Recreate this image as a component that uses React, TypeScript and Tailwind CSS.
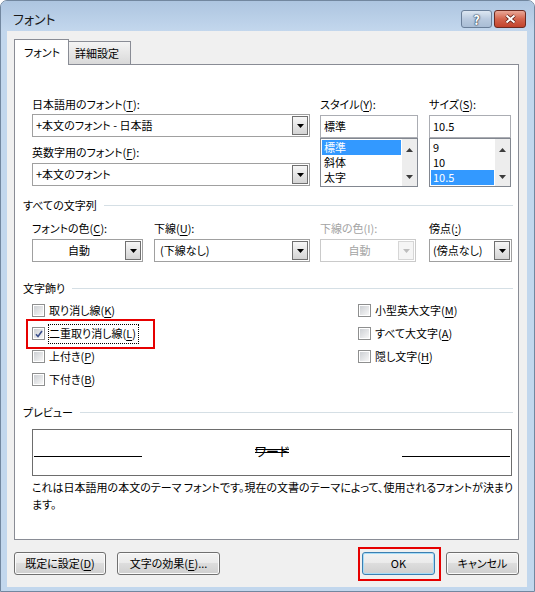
import React from "react";

type Kids = { children?: React.ReactNode; className?: string };

function U({ children }: Kids) {
  return <span className="underline underline-offset-[2px]">{children}</span>;
}

function Tri({ up = false, color = "#000" }: { up?: boolean; color?: string }) {
  return (
    <svg width="7" height="4" viewBox="0 0 7 4">
      <polygon points={up ? "0,4 7,4 3.5,0" : "0,0 7,0 3.5,4"} fill={color} />
    </svg>
  );
}

function DropBtn({ disabled = false }: { disabled?: boolean }) {
  return (
    <div
      className={`my-[1px] mr-[1px] w-[16px] flex items-center justify-center border ${
        disabled
          ? "border-[#d6d6d6] bg-[#f5f5f5]"
          : "border-[#707070] bg-gradient-to-b from-[#f7f7f7] to-[#d4d4d4]"
      }`}
    >
      <Tri color={disabled ? "#bdbdbd" : "#000"} />
    </div>
  );
}

function Combo({
  children,
  className = "",
  center = false,
  disabled = false,
  pad = "pl-[3px]",
}: Kids & { center?: boolean; disabled?: boolean; pad?: string }) {
  return (
    <div
      className={`h-[23px] flex border bg-white ${
        disabled ? "border-[#cacaca] text-[#a3a3a3]" : "border-[#a0a0a0]"
      } ${className}`}
    >
      <div className={`flex-1 flex items-center whitespace-nowrap ${center ? "justify-center" : pad}`}>
        {children}
      </div>
      <DropBtn disabled={disabled} />
    </div>
  );
}

function Label({ children, className = "" }: Kids) {
  return <div className={`h-[16px] leading-[16px] whitespace-nowrap ${className}`}>{children}</div>;
}

function Header({ children, className = "" }: Kids) {
  return (
    <div className={`h-[16px] flex items-center gap-[7px] ${className}`}>
      <span className="leading-[16px] whitespace-nowrap">{children}</span>
      <div className="flex-1 h-px bg-[#d5dfe5]" />
    </div>
  );
}

function ListBox({ items, sel }: { items: string[]; sel: number }) {
  return (
    <div className="h-[49px] flex border border-[#828790] bg-white">
      <div className="flex-1 px-[1px] pt-[1px]">
        {items.map((it, i) => (
          <div
            key={it}
            className={`h-[15px] flex items-center pl-[2px] overflow-hidden ${i === sel ? "bg-[#3399ff] text-white" : ""}`}
          >
            <span className="leading-[13px] text-[11px]">{it}</span>
          </div>
        ))}
      </div>
      <div className="w-[15px] flex flex-col items-center justify-between pt-[9px] pb-[7px] bg-[#ededed]">
        <Tri up color="#3c3c3c" />
        <Tri color="#3c3c3c" />
      </div>
    </div>
  );
}

function Check({ checked = false }: { checked?: boolean }) {
  return (
    <div className="w-[13px] h-[13px] border border-[#8e8f8f] bg-white p-[1px] shrink-0">
      <div className="w-full h-full bg-gradient-to-br from-[#cdd0d4] to-[#f7f7f7] flex items-center justify-center">
        {checked && (
          <svg width="8" height="8" viewBox="0 0 8 8">
            <path d="M1 4.2 L3 6.5 L7 1" stroke="#3a4f8c" strokeWidth="1.6" fill="none" />
          </svg>
        )}
      </div>
    </div>
  );
}

function CheckRow({ children, checked = false, focus = false, mark = false }: Kids & { checked?: boolean; focus?: boolean; mark?: boolean }) {
  return (
    <div className="relative h-[23px] flex items-center">
      <Check checked={checked} />
      <span
        className={`ml-[3px] h-[20px] pr-[2px] flex items-center whitespace-nowrap border ${
          focus ? "border-dotted border-black" : "border-transparent"
        }`}
      >
        {children}
      </span>
      {mark && <span className="absolute -left-[6px] -top-[3px] w-[129px] h-[30px] border-2 border-[#e60000]" />}
    </div>
  );
}

function Btn({ children, className = "", primary = false }: Kids & { primary?: boolean }) {
  return (
    <div
      className={`h-[23px] rounded-[3px] border flex items-center justify-center whitespace-nowrap bg-[linear-gradient(#f3f3f3,#ebebeb_45%,#dddddd_50%,#cfcfcf)] ${
        primary
          ? "border-[#3c7fb1] shadow-[inset_0_0_0_1px_#a6dcf7]"
          : "border-[#707070] shadow-[inset_0_0_0_1px_#fbfbfb]"
      } ${className}`}
    >
      {children}
    </div>
  );
}

export default function App() {
  return (
    <div className="w-[535px] h-[592px] flex flex-col bg-[#c2d7ed] border border-[#72879f] rounded-t-[7px] overflow-hidden text-[11px] text-black [font-family:'Noto_Sans_CJK_JP','Noto_Sans',sans-serif] [font-feature-settings:'palt']">
      {/* title bar */}
      <div className="h-[30px] flex items-start pl-[12px] pr-[8px] bg-gradient-to-b from-[#adc5e0] to-[#c3d7ed]">
        <div className="mt-[10px] text-[13px] leading-[16px] text-[#1a1a1a]">フォント</div>
        <div className="ml-auto mt-[9px] flex gap-[2px]">
          <div className="w-[31px] h-[18px] rounded-[3px] border border-[#6a7f99] bg-gradient-to-b from-[#dde7f2] via-[#b9cadf] to-[#a9bdd5] flex items-center justify-center">
            <span className="text-[13px] font-bold leading-none text-white [text-shadow:0_0_1px_#2d3f55,0_0_1px_#2d3f55,0_0_2px_#2d3f55]">
              ?
            </span>
          </div>
          <div className="w-[32px] h-[18px] rounded-[3px] border border-[#6b2a21] bg-gradient-to-b from-[#e9a898] via-[#d3644d] to-[#c2432c] flex items-center justify-center">
            <svg width="13" height="10" viewBox="0 0 13 10">
              <path d="M2.5 1.5 L10.5 8.5 M10.5 1.5 L2.5 8.5" stroke="#5b1b12" strokeWidth="3.6" />
              <path d="M2.5 1.5 L10.5 8.5 M10.5 1.5 L2.5 8.5" stroke="#ffffff" strokeWidth="2" />
            </svg>
          </div>
        </div>
      </div>

      {/* client area */}
      <div className="flex-1 ml-[6px] mr-[7px] mb-[4px] bg-[#f0f0f0] flex flex-col pt-[8px] pl-[7px] pr-[8px] pb-[12px]">
        {/* tabs */}
        <div className="h-[25px] flex items-end">
          <div className="relative z-10 h-[26px] -mb-[1px] w-[55px] bg-white border border-b-0 border-[#898c95] flex items-center pl-[9px]">
            フォント
          </div>
          <div className="h-[23px] w-[62px] bg-gradient-to-b from-[#f4f4f4] to-[#d9d9d9] border border-l-0 border-b-0 border-[#898c95] flex items-center pl-[6px]">
            詳細設定
          </div>
        </div>

        {/* panel */}
        <div className="flex-1 bg-white border border-[#898c95] pl-[8px] pr-[5px] pt-[31px] flex flex-col">
          <div className="flex pl-[9px]">
            <div className="w-[278px] flex flex-col">
              <Label>
                日本語用のフォント(<U>T</U>):
              </Label>
              <Combo className="mt-[2px]">+本文のフォント - 日本語</Combo>
              <Label className="mt-[7px]">
                英数字用のフォント(<U>F</U>):
              </Label>
              <Combo className="mt-[3px]">+本文のフォント</Combo>
            </div>
            <div className="ml-[10px] w-[98px] flex flex-col">
              <Label>
                スタイル(<U>Y</U>):
              </Label>
              <div className="mt-[3px] h-[23px] border border-[#abadb3] bg-white flex items-center pl-[3px]">標準</div>
              <ListBox items={["標準", "斜体", "太字"]} sel={0} />
            </div>
            <div className="ml-[11px] w-[82px] flex flex-col">
              <Label>
                サイズ(<U>S</U>):
              </Label>
              <div className="mt-[3px] h-[23px] border border-[#abadb3] bg-white flex items-center pl-[3px]">10.5</div>
              <ListBox items={["9", "10", "10.5"]} sel={2} />
            </div>
          </div>

          <Header className="mt-[10px]">すべての文字列</Header>
          <div className="flex pl-[9px] mt-[7px]">
            <div className="w-[111px] flex flex-col">
              <Label>
                フォントの色(<U>C</U>):
              </Label>
              <Combo className="mt-[3px]" center>
                自動
              </Combo>
            </div>
            <div className="ml-[11px] w-[156px] flex flex-col">
              <Label>
                下線(<U>U</U>):
              </Label>
              <Combo className="mt-[3px]" pad="pl-[5px]">
                (下線なし)
              </Combo>
            </div>
            <div className="ml-[10px] w-[96px] flex flex-col">
              <Label className="text-[#a3a3a3]">下線の色(I):</Label>
              <Combo className="mt-[3px]" center disabled>
                自動
              </Combo>
            </div>
            <div className="ml-[13px] w-[83px] flex flex-col">
              <Label>
                傍点(<U>:</U>)
              </Label>
              <Combo className="mt-[3px]">(傍点なし)</Combo>
            </div>
          </div>

          <Header className="mt-[18px]">文字飾り</Header>
          <div className="flex pl-[9px] mt-[3px]">
            <div className="w-[326px] flex flex-col">
              <CheckRow>
                取り消し線(<U>K</U>)
              </CheckRow>
              <CheckRow checked focus mark>
                二重取り消し線(<U>L</U>)
              </CheckRow>
              <CheckRow>
                上付き(<U>P</U>)
              </CheckRow>
              <CheckRow>
                下付き(<U>B</U>)
              </CheckRow>
            </div>
            <div className="flex flex-col">
              <CheckRow>
                小型英大文字(<U>M</U>)
              </CheckRow>
              <CheckRow>
                すべて大文字(<U>A</U>)
              </CheckRow>
              <CheckRow>
                隠し文字(<U>H</U>)
              </CheckRow>
            </div>
          </div>

          <Header className="mt-[13px]">プレビュー</Header>
          <div className="ml-[9px] mt-[9px] w-[480px] h-[47px] border border-[#6d6d6d] flex items-end px-[1px] pb-[18px]">
            <div className="w-[108px] h-px bg-black" />
            <div className="flex-1 flex justify-center">
              <span className="relative text-[13px] leading-[13px]">
                ワード
                <span className="absolute left-0 right-0 top-[5px] h-px bg-black" />
                <span className="absolute left-0 right-0 top-[8px] h-px bg-black" />
              </span>
            </div>
            <div className="w-[108px] h-px bg-black" />
          </div>
          <div className="pl-[9px] mt-[3px] leading-[17px]">
            <div className="whitespace-nowrap">
              これは日本語用の本文のテーマ フォントです。現在の文書のテーマによって、使用されるフォントが決まり
            </div>
            <div>ます。</div>
          </div>
        </div>

        {/* buttons */}
        <div className="mt-[12px] flex">
          <Btn className="w-[92px]">
            既定に設定(<U>D</U>)
          </Btn>
          <Btn className="ml-[11px] w-[103px]">
            文字の効果(<U>E</U>)...
          </Btn>
          <div className="relative ml-auto">
            <Btn primary className="w-[73px]">
              OK
            </Btn>
            <span className="absolute -left-[4px] -top-[5px] -right-[6px] -bottom-[6px] border-2 border-[#e60000]" />
          </div>
          <Btn className="ml-[11px] w-[73px]">キャンセル</Btn>
        </div>
      </div>
    </div>
  );
}
